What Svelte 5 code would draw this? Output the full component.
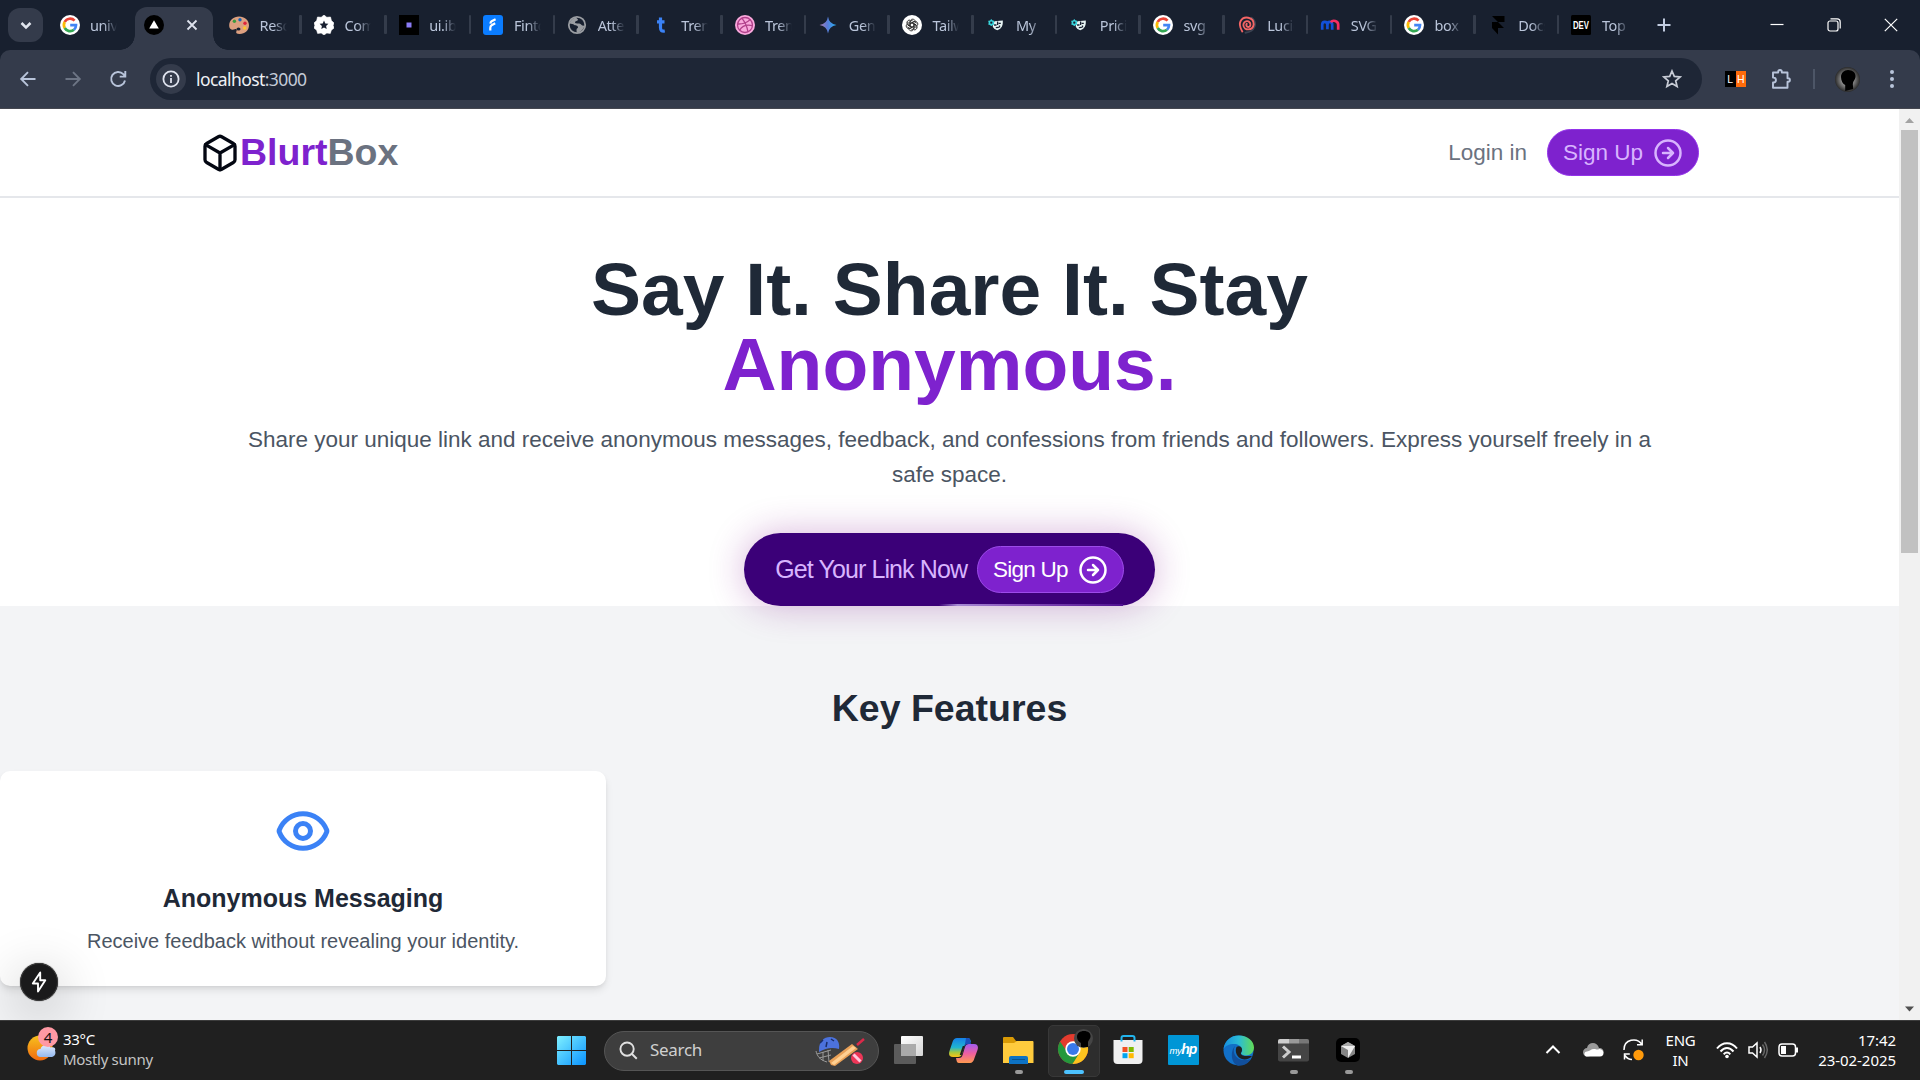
<script>
  const tabs = [
    { icon: 'google', title: 'universe' },
    { icon: 'vercel', active: true },
    { icon: 'palette', title: 'Resources' },
    { icon: 'badge', title: 'Community' },
    { icon: 'square', title: 'ui.ibelick' },
    { icon: 'fint', title: 'Fintory' },
    { icon: 'globe', title: 'Attention' },
    { icon: 'tletter', title: 'Trends' },
    { icon: 'dribbble', title: 'Trends' },
    { icon: 'gemini', title: 'Gene' },
    { icon: 'openai', title: 'Tailwind' },
    { icon: 'mask', title: 'My' },
    { icon: 'mask', title: 'Pricing' },
    { icon: 'google', title: 'svg' },
    { icon: 'lucide', title: 'Lucide' },
    { icon: 'mm', title: 'SVG c' },
    { icon: 'google', title: 'box' },
    { icon: 'framer', title: 'Docs' },
    { icon: 'dev', title: 'Top' }
  ];
</script>

{#snippet favicon(name)}
  <svg class="fav" viewBox="0 0 20 20">
    {#if name === 'google'}
      <circle cx="10" cy="10" r="10" fill="#fff" />
      <g fill="none" stroke-width="2.7">
        <path d="M14.6 5.6A6.1 6.1 0 0 0 4.7 7" stroke="#ea4335" />
        <path d="M4.7 7a6.1 6.1 0 0 0 0 6" stroke="#fbbc05" />
        <path d="M4.7 13a6.1 6.1 0 0 0 9.3 1.7" stroke="#34a853" />
        <path d="M10.2 10.2H16a6.1 6.1 0 0 1-2 4.5" stroke="#4285f4" />
      </g>
    {:else if name === 'vercel'}
      <circle cx="10" cy="10" r="10" fill="#000" />
      <path d="M10 5.2 14.8 13.4H5.2z" fill="#fff" />
    {:else if name === 'palette'}
      <path d="M10 1.5C15.6 1.5 20 5 20 10.3c0 5-4 8.7-9.3 8.7-3.2 0-4.2-1.3-3.2-3 .8-1.4-.2-2.4-1.700-1.700-2 .9-5.600.8-5.600-4C.2 5.200 4.600 1.500 10 1.500z" fill="#dda080" />
      <circle cx="5.4" cy="6.3" r="1.7" fill="#3c9a3e" /><circle cx="11" cy="4.8" r="1.7" fill="#1565b8" />
      <circle cx="16" cy="8.2" r="1.7" fill="#e0243c" /><circle cx="15.7" cy="13" r="1.7" fill="#ffc62b" />
      <ellipse cx="9.5" cy="14" rx="2" ry="1.5" fill="#182030" />
    {:else if name === 'badge'}
      <path d="M10 0l2.800 2.300 3.700-.3.900 3.600L20 8l-.9 2.300L20 13l-2.700 2.200-1 3.200-3.500-.4L10 20l-2.800-2-3.600.4-.9-3.200L0 13l.9-2.700L0 8l2.700-2.400L3.500 2l3.700.3z" fill="#fff" stroke="#fff" stroke-width=".6" stroke-linejoin="round" />
      <path d="M10 5.600l1.300 2.800 3.100.4-2.300 2.100.6 3.100L10 12.500 7.300 14l.6-3.100-2.300-2.100 3.100-.4z" fill="#182030" />
    {:else if name === 'square'}
      <rect width="20" height="20" fill="#000" /><rect x="7.5" y="7.5" width="5" height="5" fill="#8b7cf6" />
    {:else if name === 'fint'}
      <rect width="20" height="20" rx="3" fill="#0a7cff" />
      <path d="M12.600 4.300 8.700 6.200Q7.600 7 7.400 8.600M12.200 8.300 8.600 10.200Q7.300 11 7.300 13v2.600" stroke="#fff" stroke-width="2.200" fill="none" />
    {:else if name === 'globe'}
      <circle cx="10" cy="10" r="8.2" fill="#182030" stroke="#9a9da2" stroke-width="1.8" />
      <path d="M9 2.500c-3 .5-6 3-6.300 6l3.800.8c.6 1.700 3.600.7 4.500 2.500.5 1.400-1.700 1.700-1.500 3.300l.2 2.500C13 18 17 14 17.500 10.500c-2.500.7-3-1-4.500-1.700C11 8 8.500 9 8 7.500 8 6 11 6 11 4.500z" fill="#9a9da2" />
    {:else if name === 'tletter'}
      <path d="M9.500 2.500v10c0 3.200 1.300 4 4.300 3.500M6 6.800h7.500" stroke="#3b82f6" stroke-width="3.200" fill="none" />
    {:else if name === 'dribbble'}
      <circle cx="10" cy="10" r="10" fill="#f9a8dc" />
      <g fill="none" stroke="#b0408a" stroke-width="1.3"><circle cx="10" cy="10" r="7.5" /><path d="M6.800 3.200C10 7 12 11 13 17M2.600 9c5 .2 9-1 12.600-4.400M4.600 15.200C7 11 11.500 9.400 17.400 10.600" /></g>
    {:else if name === 'gemini'}
      <defs><linearGradient id="gem"><stop offset="0" stop-color="#b07fae" /><stop offset=".45" stop-color="#5b7bd8" /><stop offset="1" stop-color="#23b0f5" /></linearGradient></defs>
      <path d="M10 1.500Q11 9 18.500 10 11 11 10 18.500 9 11 1.500 10 9 9 10 1.500z" fill="url(#gem)" />
    {:else if name === 'openai'}
      <circle cx="10" cy="10" r="10" fill="#fff" />
      <g fill="none" stroke="#222" stroke-width=".85">
        {#each [0, 60, 120, 180, 240, 300] as a}
          <path transform="rotate({a} 10 10)" d="M8.200 11.200V6.600c0-2.900 3.900-3.300 5-.8M8.200 8.500l3.600-2.100 2.900 1.700" />
        {/each}
      </g>
    {:else if name === 'mask'}
      <path d="M8.500 6.200 16.800 5.500c.3 4.500-.8 8-5.500 9.800-2.500-.7-4-2.300-4.700-4.300z" fill="#e8f5f5" />
      <path d="M8 10h2.500M12.600 8.300h2.200M9.800 12.600l3-.3M11.600 6.500v3.500M13.500 10.500v2" stroke="#182030" stroke-width="1.3" />
      <circle cx="5.3" cy="7.7" r="2" fill="none" stroke="#39d5dc" stroke-width="1.5" />
      <path d="M5.300 4.300v6.800M2.400 6l5.800 3.400M8.200 6 2.400 9.400" stroke="#39d5dc" stroke-width="1.1" /><circle cx="5.3" cy="7.7" r="1.1" fill="#182030" />
    {:else if name === 'lucide'}
      <g fill="none" stroke-width="1.9" stroke-linecap="round">
        <path d="M14.500 2.800c6.500 5 3.500 14-6 14.900" stroke="#3b4352" />
        <path d="M9.700 8.800c-1.800 3.200 3.300 4.800 3.700 1.100.2-5.400-7.400-4.700-7 .4.400 5.400 9.500 5.800 10.300-.9C16.800 1.500 6.500.500 3.500 6.300c-2 4 .2 7.200 1.800 10.200" stroke="#f56565" />
      </g>
    {:else if name === 'mm'}
      <g fill="none" stroke-width="2.7"><path d="M2.200 14.800V9.800c0-4 5.200-4 5.200 0v4.500" stroke="#1250d8" /><path d="M7.400 9.800c0-4 4.800-4 4.800 0v5" stroke="#1250d8" /><path d="M10.800 7.200c2-2.600 7.400-1.500 7.400 2.600v5" stroke="#f52d63" /></g>
    {:else if name === 'framer'}
      <path d="M4 1h12.500v6H10L4 1zM4 7h6l6 6h-6v6.500L4 13z" fill="#000" />
    {:else}
      <rect width="20" height="20" rx="1.5" fill="#000" />
      <text x="10" y="14" text-anchor="middle" textLength="16" lengthAdjust="spacingAndGlyphs" class="devtext">DEV</text>
    {/if}
  </svg>
{/snippet}

{#snippet arrowCircle()}
  <svg class="arrow" viewBox="0 0 24 24"><circle cx="12" cy="12" r="10" /><path d="M8 12h8M12 16l4-4-4-4" /></svg>
{/snippet}

<div class="screen">
  <div class="tabstrip">
    <div class="search-tabs"><svg width="20" height="20" viewBox="0 0 20 20"><path d="M5.500 8l4.500 4.500L14.500 8" /></svg></div>
    {#each tabs as tab, i}
      <div class="tab" class:wide={i < 5} class:active={tab.active} class:sep={i > 2}>
        {@render favicon(tab.icon)}
        {#if tab.active}
          <svg class="tabclose" viewBox="0 0 12 12"><path d="M1.500 1.500l9 9M10.500 1.500l-9 9" /></svg>
        {:else}
          <span class="tabtitle">{tab.title}</span>
        {/if}
      </div>
    {/each}
    <svg class="newtab" viewBox="0 0 14 14"><path d="M7 .5v13M.5 7h13" /></svg>
    <div class="winbtns">
      <svg viewBox="0 0 14 14"><path d="M.5 6.500h13" /></svg>
      <svg viewBox="0 0 14 14"><rect x="1" y="3" width="10" height="10" rx="2" /><path d="M3.500.9h6.700q3 0 3 3v6.600" /></svg>
      <svg viewBox="0 0 14 14"><path d="M.8.8l12.400 12.400M13.200.8.8 13.200" /></svg>
    </div>
  </div>

  <div class="toolbar">
    <div class="navbtns">
      <svg viewBox="0 0 20 20"><path d="M17.500 10H3.500M10 3.200 3.200 10l6.800 6.800" /></svg>
      <svg class="off" viewBox="0 0 20 20"><path d="M2.500 10h14M10 3.200l6.800 6.800-6.800 6.800" /></svg>
      <svg viewBox="0 0 20 20"><path d="M17 11.500a7 7 0 1 1-1.700-6.300l1.700 2M17.300 2v5.600h-5.600" /></svg>
    </div>
    <div class="omnibox">
      <span class="info"><svg width="18" height="18" viewBox="0 0 18 18"><circle cx="9" cy="9" r="7.6" /><path d="M9 8v5M9 5v1.700" /></svg></span>
      <span class="url">localhost<i>:3000</i></span>
      <svg class="star" viewBox="0 0 20 20"><path d="M10 2l2.300 5.400 5.900.5-4.500 3.900 1.400 5.700L10 14.500l-5.100 3 1.400-5.700L1.800 7.900l5.900-.5z" /></svg>
    </div>
    <div class="ext"><b>L</b><b>H</b></div>
    <svg class="puzzle" viewBox="0 0 22 22"><path d="M3 4.500h5.200V3.800a1.800 1.800 0 0 1 3.600 0v.7h5.700v5.800h.7a1.700 1.700 0 0 1 0 3.400h-.7v6H3v-5.200h.5a2.300 2.300 0 0 0 0-4.900H3z" /></svg>
    <span class="divider"></span>
    <svg class="avatar" viewBox="0 0 25 25"><defs><radialGradient id="av"><stop offset=".5" stop-color="#8a8a8a" /><stop offset="1" stop-color="#2a2a2a" /></radialGradient></defs><circle cx="12.5" cy="12.5" r="12.5" fill="url(#av)" /><path d="M13 3c5 0 8 3 7.500 7-.4 3-2.500 4-2.700 7l.4 5-8 2v-6C8 17 6 14 6 10c0-4 3-7 7-7z" fill="#000" /></svg>
    <svg class="kebab" viewBox="0 0 6 20"><circle cx="3" cy="3" r="2" /><circle cx="3" cy="10" r="2" /><circle cx="3" cy="17" r="2" /></svg>
  </div>

  <div class="viewport">
    <main>
      <header>
        <div class="logo">
          <svg viewBox="0 0 24 24"><path d="M21 8a2 2 0 0 0-1-1.730l-7-4a2 2 0 0 0-2 0l-7 4A2 2 0 0 0 3 8v8a2 2 0 0 0 1 1.730l7 4a2 2 0 0 0 2 0l7-4A2 2 0 0 0 21 16Z" /><path d="m3.300 7 8.700 5 8.700-5M12 22V12" /></svg>
          <span class="purple">Blurt</span><span class="gray">Box</span>
        </div>
        <nav>
          <span class="login">Login in</span>
          <button class="signup">Sign Up {@render arrowCircle()}</button>
        </nav>
      </header>
      <section class="hero">
        <h1>Say It. Share It. Stay<br /><span class="purple">Anonymous.</span></h1>
        <p>Share your unique link and receive anonymous messages, feedback, and confessions from friends and followers. Express yourself freely in a safe space.</p>
        <div class="cta">
          <span>Get Your Link Now</span>
          <button class="signup">Sign Up {@render arrowCircle()}</button>
        </div>
      </section>
      <section class="features">
        <h2>Key Features</h2>
        <article class="card">
          <svg viewBox="0 0 24 24"><path d="M2.500 12.348a1 1 0 0 1 0-.696 10.150 10.150 0 0 1 19 0 1 1 0 0 1 0 .696 10.150 10.150 0 0 1-19 0" /><circle cx="12" cy="12" r="3" /></svg>
          <h3>Anonymous Messaging</h3>
          <p>Receive feedback without revealing your identity.</p>
        </article>
      </section>
      <div class="devbadge"><svg width="20" height="24" viewBox="0 0 20 24"><path d="M11.200 2.500 3.800 13.500h5.200v8L16.300 10.300H11.200z" /></svg></div>
    </main>
    <div class="scrollbar">
      <svg width="21" height="21" viewBox="0 0 21 21"><path d="M6 14l4.500-5 4.500 5z" fill="#a3a3a3" /></svg>
      <div class="thumb"></div>
      <svg width="21" height="21" viewBox="0 0 21 21"><path d="M6 7.500h9l-4.500 5z" fill="#505050" /></svg>
    </div>
  </div>

  <footer class="taskbar">
    <div class="weather">
      <div class="wicon">
        <svg width="32" height="36" viewBox="0 0 32 36"><defs><linearGradient id="sun" x2="0" y2="1"><stop stop-color="#f6c21d" /><stop offset="1" stop-color="#f26a10" /></linearGradient><linearGradient id="cl" x2="0" y2="1"><stop stop-color="#e3edff" /><stop offset="1" stop-color="#94b8ee" /></linearGradient></defs><circle cx="13" cy="19" r="12.5" fill="url(#sun)" /><path d="M14 28a4 4 0 0 1-.5-8c1-5 8-6 10-1.500 4-1 5.500 1 4.500 3 1.500 4-1 6.500-4 6.500z" fill="url(#cl)" /></svg>
        <span>4</span>
      </div>
      <div class="wtext"><span>33°C</span><span class="dim">Mostly sunny</span></div>
    </div>

    <svg class="start" viewBox="0 0 29 29"><defs><linearGradient id="win" gradientUnits="userSpaceOnUse" x1="0" y1="0" x2="29" y2="29"><stop stop-color="#7ff0ff" /><stop offset="1" stop-color="#0a93ff" /></linearGradient></defs><path d="M1 0h13v14H0V1zM15 0h13l1 1v13H15zM0 15h14v14H1l-1-1zM15 15h14v13l-1 1H15z" fill="url(#win)" /></svg>
    <div class="search">
      <svg class="glass" viewBox="0 0 20 20"><circle cx="8.5" cy="8.5" r="7" /><path d="M13.700 13.700l5 5" /></svg>
      <span>Search</span>
      <svg class="cricket" viewBox="0 0 50 30"><g fill="none" stroke="#999" stroke-width="1"><path d="M1 15c1 5 4 9 11 11M2 18l14-4M4 22l12-3M8 16v9M13 14l1 12" /></g><path d="M4 14C4 5 9 1 15 1c7 0 10 5 9 12-7-2-13-1-20 3z" fill="#4c72dc" /><path d="M12 6l-1 5M5 7l3-3M19 5l-3-2" stroke="#192d68" stroke-width="1.5" /><path d="M14 25 37 8l6 5-23 17-4-1z" fill="#e9a158" /><path d="M16 27 38 10l3 2-22 17z" fill="#ffd092" /><path d="M42 9 49 3" stroke="#db2949" stroke-width="2.5" /><circle cx="42" cy="22" r="6" fill="#ed3657" /><path d="M38.500 18.500l7 7" stroke="#ffc8de" stroke-width="3" /></svg>
    </div>
    <div class="apps">
      <div class="app"><svg width="29" height="28" viewBox="0 0 29 28"><defs><linearGradient id="tv" x2="1" y2="1"><stop stop-color="#fff" /><stop offset="1" stop-color="#d5d5d5" /></linearGradient></defs><rect x="7" width="22" height="20" rx="1" fill="url(#tv)" /><rect y="8" width="22" height="20" rx="1" fill="#666" opacity=".85" /><path d="M7 8h15v12H7z" fill="#aaa" /></svg></div>
      <div class="app"><svg width="29" height="27" viewBox="0 0 29 27"><defs><linearGradient id="cpa" x2="0" y2="1"><stop stop-color="#1580e8" /><stop offset=".5" stop-color="#21b5d0" /><stop offset=".75" stop-color="#a3c940" /><stop offset="1" stop-color="#fbc316" /></linearGradient><linearGradient id="cpb" x2="0" y2="1"><stop stop-color="#a05cf0" /><stop offset=".5" stop-color="#ee5fa0" /><stop offset="1" stop-color="#ff9a4f" /></linearGradient></defs><path d="M8 1h11c2 0 2.500 2 3 4h-3c-2 0-3 2-3.600 4L13 17c-.7 2-2 3-4 3H4c-4 0-4.500-3-3.500-6l3-9C4.300 2.500 6 1 8 1z" fill="url(#cpa)" /><path d="M21 26H10c-2 0-2.500-2-3-5h3c2 0 3-1 3.600-3L16 10c.7-2 2-3 4-3h5c4 0 4.500 3 3.500 6l-3 8c-.8 3.500-2.500 5-4.500 5z" fill="url(#cpb)" /><path d="M17 1h2c2 0 2.500 2 3 6h-3c-2 0-3 1-3.500 3z" fill="#1950bd" /><path d="M13.800 9h1.900l-3 9h-2z" fill="#202020" /></svg></div>
      <div class="app run"><svg width="31" height="27" viewBox="0 0 31 27"><path d="M0 1q0-1 1-1h9l3 4h17v8H0z" fill="#d99a05" /><path d="M0 6h11l3-2h15.500q1 0 1 1v21H0z" fill="#ffcb3d" /><path d="M6 27v-6q0-2 2-2h15q2 0 2 2v6z" fill="#0d72c4" /><path d="M9 22.500h13" stroke="#09538e" /></svg></div>
      <div class="app run on"><svg width="38" height="38" viewBox="0 0 38 38">
        <circle cx="18" cy="22" r="15" fill="#e33b2e" /><path d="M5 14.500 13 26l5 11a15 15 0 0 1-13-22.500z" fill="#24983c" /><path d="M13 27l5 10 7-12z" fill="#24983c" /><path d="M18 14.500H31A15 15 0 0 1 17.500 37l7-11z" fill="#fcc31e" /><circle cx="18" cy="22" r="7.7" fill="#fff" /><circle cx="18" cy="22" r="6" fill="#3979ea" /><circle cx="28.5" cy="11.5" r="9.5" fill="#454545" /><path d="M29 4c4 0 7 2 6.500 6-.3 2-2 3-2.500 5v5h-7v-4c-2-1-4-3-4-6 0-4 3-6 7-6z" fill="#000" /></svg></div>
      <div class="app"><svg width="30" height="30" viewBox="0 0 30 30"><path d="M.5 5h29v20q0 4-4 4h-21q-4 0-4-4z" fill="#f0f0f0" /><path d="M8.500 6.500V3q0-2 2-2h9q2 0 2 2v3.500" fill="none" stroke="#22b5ee" stroke-width="2" /><path d="M9.500 12h5v5h-5z" fill="#f25022" /><path d="M15.700 12h5v5h-5z" fill="#7fba00" /><path d="M9.500 18.200h5v5h-5z" fill="#00a4ef" /><path d="M15.700 18.200h5v5h-5z" fill="#ffb900" /></svg></div>
      <div class="app"><span class="hp"><small>my</small>hp</span></div>
      <div class="app"><svg width="31" height="31" viewBox="0 0 31 31"><defs><linearGradient id="eg"><stop stop-color="#168ee0" /><stop offset=".5" stop-color="#2bbcd6" /><stop offset="1" stop-color="#62dc55" /></linearGradient></defs><circle cx="15.5" cy="15.5" r="15" fill="#1270c8" /><path d="M.5 14C2 5 8 .5 16 .5c9 0 15 6 15 12 0 5-4 8-8 8-3 0-5-1-5-2.500 1-1 1.500-2 1-4-1-3-4-5-8-5-5 0-9 2-10.500 5z" fill="url(#eg)" /><path d="M12 11c-3 5-.5 15 11 14 2 0 4-.7 5.500-1.500C25 29 20 31 15 30.500 8 29 7 16 12 11z" fill="#114f9c" /><path d="M13.500 12c2.500-2 6 0 5.500 3 0 2-1.500 2.500-1 4 .7 1.500 3 2 5 2h6c-2 3-7 4-10 3-5-1.500-7.500-7-5.500-12z" fill="#202020" /></svg></div>
      <div class="app run"><svg width="31" height="23" viewBox="0 0 31 23"><rect width="31" height="22.5" rx="2" fill="#454545" /><path d="M2 0h9v4.500H0V2q0-2 2-2z" fill="#ccc" /><path d="M11 0h10v4.500H11z" fill="#999" /><path d="M21 0h8q2 0 2 2v2.500H21z" fill="#777" /><path d="M5 7.500l6 5.500-6 5.500" fill="none" stroke="#ccc" stroke-width="3" /><path d="M14 18h9" stroke="#fff" stroke-width="3" /></svg></div>
      <div class="app run"><svg width="24" height="24" viewBox="0 0 24 24"><rect width="24" height="24" rx="5" fill="#000" /><path d="M12 4l7 4v8l-7 4-7-4V8z" fill="#858585" /><path d="M5 8l7-4 7 4-7 3z" fill="#aaa" /><path d="M5 8h14l-7 12v-8z" fill="#eee" /></svg></div>
    </div>

    <div class="tray">
      <div class="c40"><svg width="16" height="16" viewBox="0 0 16 16"><path d="M1.500 11l6.500-6.500 6.500 6.500" class="ln" /></svg></div>
      <div class="c40"><svg width="21" height="14" viewBox="0 0 21 14"><path d="M5 13.500C1 13.500 0 11 0 9s2-4 4-4c1-6 10-7 12 0 4 0 5 3 4.500 5z" fill="#9a9a9a" /><path d="M3 13.500c-2.500-1-2-5 1-5 3-.2 4-3 8-2.500 2 .5 3 1 4 0 5-.5 6.500 7.500 1 7.500z" fill="#fff" /></svg></div>
      <div class="c40"><svg width="21" height="22" viewBox="0 0 21 22"><path d="M1 11C.8 0 14-2 19 5.500M19.200.5v5.200h-5.200M1.500 20.500V15h5.300M2 16.500c2 3 4.500 4 7 4" class="ln thin" /><circle cx="15.5" cy="16" r="5.2" fill="#ff9a0b" /></svg></div>
      <div class="lang"><span>ENG</span><span>IN</span></div>
      <div class="c38"><svg width="22" height="18" viewBox="0 0 22 18"><path d="M1 7.500c5.500-7 14.500-7 20 0M4.500 10.500c4-4.700 9-4.700 13 0M7.700 13.300c2-2.300 4.600-2.300 6.600 0" class="ln" /><circle cx="11" cy="15.5" r="1.8" fill="#fff" /></svg></div>
      <div class="c24"><svg width="20" height="18" viewBox="0 0 20 18"><path d="M1 6h3.500L9 2v14l-4.500-4H1zM12 6q2 3 0 6" class="ln thin" /><path d="M14.500 3.500q4 5.500 0 11M16.500 1q5.500 8 0 16" class="ln thin faint" /></svg></div>
      <div class="c36"><svg width="21" height="14" viewBox="0 0 21 14"><rect x="1" y="1" width="16.5" height="12" rx="3" class="ln thin" /><rect x="3" y="3" width="5" height="8" fill="#fff" /><path d="M19 4.500v5" class="ln" /></svg></div>
      <div class="clock"><span>17:42</span><span>23-02-2025</span></div>
    </div>
  </footer>
</div>

<style>
  :global(body) { margin: 0; background: #fff; overflow: hidden; }
  .screen { width: 1920px; height: 1080px; display: flex; flex-direction: column; overflow: hidden; background: #18202f; font-family: "Noto Sans", sans-serif; }
  .screen * { box-sizing: border-box; }
  svg { display: block; flex: none; }

  /* Tab strip */
  .tabstrip { height: 50px; flex: none; background: #18202f; display: flex; align-items: center; }
  .search-tabs { width: 35px; height: 34px; margin: 0 2.5px 0 8px; border-radius: 12px; background: #343b4b; display: grid; place-items: center; }
  .search-tabs path { fill: none; stroke: #e1e5ee; stroke-width: 2.5; }
  .tab { position: relative; width: 83.7px; height: 50px; flex: none; display: flex; align-items: center; padding-left: 14px; gap: 10.5px; }
  .tab.wide { width: 84.8px; }
  .tab.sep::before { content: ""; position: absolute; left: -.5px; top: 15px; width: 2.5px; height: 19px; border-radius: 1px; background: #343c4b; }
  .fav { width: 20px; height: 20px; }
  .devtext { font: 700 11px "Liberation Sans", sans-serif; fill: #fff; }
  .tabtitle { width: 27px; height: 22px; overflow: hidden; white-space: nowrap; font-size: 14.5px; line-height: 22px; letter-spacing: -.4px; color: #bac5da; -webkit-mask-image: linear-gradient(90deg, #000 50%, transparent 100%); mask-image: linear-gradient(90deg, #000 50%, transparent 100%); }
  .tab.active { gap: 22px; z-index: 1; }
  .tab.active > :global(*) { position: relative; z-index: 1; }
  .tab.active::before { content: ""; position: absolute; left: 4.5px; top: 7px; width: 78px; height: 43px; border-radius: 12px 12px 0 0; background: #343b4b; }
  .tab.active::after { content: ""; position: absolute; left: -10.5px; right: -12.5px; bottom: 0; height: 15px; background: radial-gradient(circle at 0 0, transparent 14.5px, #343b4b 15px) left / 15px 15px no-repeat, radial-gradient(circle at 100% 0, transparent 14.5px, #343b4b 15px) right / 15px 15px no-repeat; }
  .tabclose { width: 12px; height: 12px; fill: none; stroke: #dfe3ee; stroke-width: 1.8; }
  .newtab { width: 14px; height: 14px; margin-left: 15.5px; fill: none; stroke: #c2cce0; stroke-width: 2; }
  .winbtns { margin-left: auto; margin-right: 22px; display: flex; gap: 43px; }
  .winbtns svg { width: 14px; height: 14px; fill: none; stroke: #fff; stroke-width: 1.2; }

  /* Toolbar */
  .toolbar { height: 59px; flex: none; background: #343b4b; border-bottom: 1px solid #454750; border-radius: 10px 10px 0 0; display: flex; align-items: center; }
  .navbtns { width: 150px; display: flex; gap: 25px; padding-left: 17.5px; }
  .navbtns svg { width: 20px; height: 20px; fill: none; stroke: #b8c4da; stroke-width: 1.9; }
  .navbtns .off { stroke: #6d7585; }
  .omnibox { width: 1552px; height: 42px; border-radius: 21px; background: #1e2636; display: flex; align-items: center; padding: 0 20px 0 6px; }
  .info { width: 30px; height: 30px; border-radius: 50%; background: #343b4b; display: grid; place-items: center; }
  .info svg { fill: none; stroke: #dfe3ee; stroke-width: 1.8; }
  .url { margin-left: 10px; font-size: 17.5px; letter-spacing: -.58px; color: #eef0f5; }
  .url i { font-style: normal; color: #c3cad7; }
  .star { width: 20px; height: 20px; margin-left: auto; fill: none; stroke: #c8ccd6; stroke-width: 1.7; }
  .ext { margin-left: 23px; width: 21px; height: 16px; display: flex; font: 10.5px/16px "Liberation Sans", sans-serif; color: #fff; text-align: center; }
  .ext b { width: 50%; background: #000; font-weight: 400; }
  .ext b + b { background: #ff6b0a; }
  .puzzle { width: 22px; height: 22px; margin-left: 24px; fill: none; stroke: #b8c4da; stroke-width: 1.9; stroke-linejoin: round; }
  .divider { width: 2px; height: 20px; margin-left: 21px; background: #4d5667; }
  .avatar { width: 25px; height: 25px; margin-left: 20px; }
  .kebab { width: 6px; height: 20px; margin-left: 29px; fill: #b8c4da; }

  /* Page */
  .viewport { height: 911px; flex: none; display: flex; font-family: "Liberation Sans", Arial, sans-serif; }
  main { position: relative; width: 1899px; height: 911px; background: #fff; overflow: hidden; }
  header { height: 89px; padding: 0 200px; border-bottom: 2px solid #e5e7eb; display: flex; align-items: center; justify-content: space-between; }
  .logo { display: flex; align-items: center; font-size: 37.5px; line-height: 45px; font-weight: 700; }
  .logo svg { width: 40px; height: 40px; fill: none; stroke: #030712; stroke-width: 2; stroke-linecap: round; stroke-linejoin: round; }
  .purple { color: #7e22ce; }
  .gray { color: #6b7280; }
  nav { display: flex; align-items: center; gap: 20px; }
  .login { font-size: 22.5px; line-height: 35px; color: #6b7280; }
  .signup { height: 47px; padding: 0 15px; display: flex; align-items: center; gap: 10px; border: 1px solid #9333ea; border-radius: 24px; background: #7e22ce; color: #d8b4fe; font: 22.5px/35px "Liberation Sans", Arial, sans-serif; letter-spacing: inherit; white-space: nowrap; }
  .arrow { width: 30px; height: 30px; fill: none; stroke: currentColor; stroke-width: 2; stroke-linecap: round; stroke-linejoin: round; }
  .hero { height: 408px; padding: 54px 240px 0; display: flex; flex-direction: column; align-items: center; text-align: center; }
  h1 { margin: 0; font-size: 75px; line-height: 75px; font-weight: 700; color: #1f2937; }
  .hero p { margin: 20px 0 41px; font-size: 22.5px; line-height: 35px; color: #4b5563; }
  .cta { position: relative; z-index: 1; width: 411px; height: 73px; flex: none; display: flex; align-items: center; justify-content: center; gap: 10px; border-radius: 37px; background: #3b0078; color: #d8b4fe; font-size: 25px; letter-spacing: -.9px; white-space: nowrap; box-shadow: 0 0 36px rgba(134, 25, 143, .32); }
  .cta::after { content: ""; position: absolute; left: 195px; right: 32px; bottom: 0; height: 2px; background: linear-gradient(90deg, transparent, #a78bd4 10%, #8a55bd 40%, #4f1090); }
  .cta .signup { color: #fff; border-color: #9d4bea; letter-spacing: -.78px; }
  .features { height: 414px; padding-top: 80px; background: #f3f4f6; }
  h2 { margin: 0 0 40px; font-size: 37.5px; line-height: 45px; text-align: center; color: #1f2937; }
  .card { width: 606px; height: 215px; padding: 30px; border-radius: 10px; background: #fff; box-shadow: 0 5px 8px -1px rgba(0, 0, 0, .1), 0 2px 5px -2px rgba(0, 0, 0, .1); display: flex; flex-direction: column; align-items: center; }
  .card svg { width: 60px; height: 60px; fill: none; stroke: #3b82f6; stroke-width: 2; stroke-linecap: round; stroke-linejoin: round; }
  h3 { margin: 20px 0 10px; font-size: 25px; line-height: 35px; color: #1f2937; }
  .card p { margin: 0; font-size: 20px; line-height: 30px; color: #4b5563; white-space: nowrap; }
  .devbadge { position: absolute; left: 20px; bottom: 19px; width: 38px; height: 38px; border-radius: 50%; background: #1a1a1b; border: 1px solid #3a3a3a; display: grid; place-items: center; box-shadow: 0 0 1px #000, 0 12px 50px 8px rgba(0, 0, 0, .16); }
  .devbadge path { fill: none; stroke: #fff; stroke-width: 1.9; stroke-linejoin: round; }
  .scrollbar { width: 21px; background: #f1f1f1; display: flex; flex-direction: column; align-items: center; }
  .thumb { width: 17px; height: 423px; background: #c1c1c1; margin-bottom: auto; }

  /* Taskbar */
  .taskbar { height: 60px; flex: none; background: #202020; border-top: 1px solid #3c3c3c; display: flex; align-items: center; color: #fff; font-size: 15px; line-height: 20px; letter-spacing: -.3px; }
  .weather { width: 557px; flex: none; padding: 0 0 3px 27px; display: flex; }
  .wicon { position: relative; width: 36px; height: 40px; }
  .wicon span { position: absolute; left: 11px; top: -2.5px; width: 20px; height: 20px; border-radius: 50%; background: #ff99a4; color: #111; text-align: center; line-height: 20px; }
  .wtext { display: flex; flex-direction: column; }
  .dim { color: #c4c4c4; }
  .start { width: 29px; height: 29px; }
  .search { width: 275px; height: 40px; flex: none; margin-left: 18px; padding: 0 13px 0 14px; border: 1px solid #555; border-radius: 20px; background: #3e3e3e; display: flex; align-items: center; font-size: 17px; color: #d0d0d0; }
  .search span { padding-bottom: 1px; }
  .glass { width: 19px; height: 19px; margin-right: 12px; fill: none; stroke: #e0e0e0; stroke-width: 2; }
  .cricket { width: 50px; height: 30px; margin-left: auto; }
  .apps { display: flex; margin-left: 1.5px; padding-bottom: 1px; }
  .app { position: relative; width: 55px; height: 50px; display: grid; place-items: center; }
  .app.run::after { content: ""; position: absolute; left: 24px; bottom: 1px; width: 8px; height: 4px; border-radius: 2px; background: #999; }
  .app.on::before { content: ""; position: absolute; left: 2.5px; top: 0; width: 50px; height: 50px; border: 1px solid #383838; border-radius: 5px; background: #2d2d2d; }
  .app.on::after { left: 18px; width: 20px; background: #4cc2ff; }
  .app.on svg { position: relative; top: -4px; left: 1px; }
  .hp { width: 31px; height: 30px; border-radius: 1px; background: #0096d6; font: italic 700 14px/29px "Liberation Sans", sans-serif; letter-spacing: -1px; text-align: center; }
  .hp small { font-size: 9.5px; font-weight: 400; letter-spacing: -.5px; }
  .tray { margin-left: auto; margin-right: 24px; width: 363px; flex: none; display: flex; align-items: center; padding-bottom: 2px; }
  .tray > div { flex: none; display: grid; justify-items: center; }
  .c40 { width: 40px; }
  .lang { width: 55px; }
  .c38 { width: 38px; }
  .c24 { width: 24px; }
  .c36 { width: 36px; }
  .ln { fill: none; stroke: #fff; stroke-width: 2; }
  .thin { stroke-width: 1.5; }
  .faint { stroke: #666; }
  .tray > .clock { flex: 1; justify-items: end; letter-spacing: -.05px; }
</style>
